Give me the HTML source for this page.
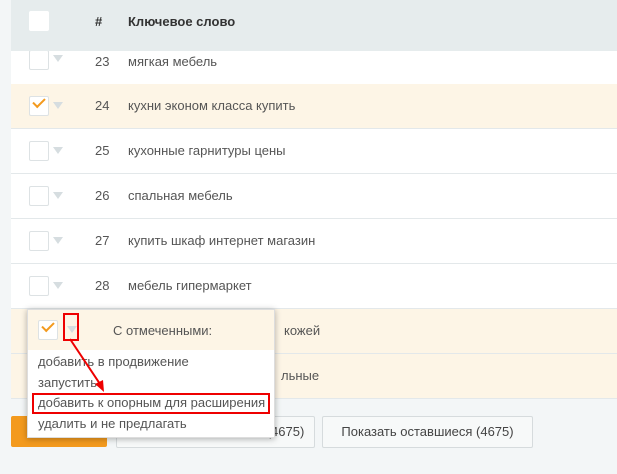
<!DOCTYPE html><html><head><meta charset="utf-8"><style>
body{margin:0;width:617px;height:474px;overflow:hidden;background:#f3f6f7;font-family:"Liberation Sans","DejaVu Sans",sans-serif;font-size:13px;color:#555;position:relative}
.hdr{position:absolute;left:11px;top:0;width:606px;height:51px;background:#e6eced}
.row{position:absolute;left:11px;width:606px;height:44px;border-bottom:1px solid #e3e8ea;background:#fff}
.row.y{background:#fdf5e6}
.cb{position:absolute;left:18px;top:12px;width:18px;height:18px;border:1px solid #dde2e4;background:#fff;border-radius:2px}
.tri{position:absolute;left:42px;top:18px;width:0;height:0;border-left:5px solid transparent;border-right:5px solid transparent;border-top:7px solid #d6dde0}
.n{position:absolute;left:84px;top:14px}
.k{position:absolute;left:117px;top:14px}
.chk{position:absolute;left:3px;top:1px;width:10px;height:5px;border-left:2px solid #f39a1e;border-bottom:2px solid #f39a1e;transform:rotate(-45deg)}
.btn{position:absolute;top:416px;height:30px;border:1px solid #d6dbdd;background:#f7f9f9;border-radius:2px;text-align:center;line-height:30px;font-size:13px;color:#444}
</style></head><body>
<div class="row" style="top:40px;height:44px"><div class="cb" style="top:10px"></div><div class="tri" style="top:15px"></div><span class="n" style="top:14px">23</span><span class="k">мягкая мебель</span></div>
<div class="hdr"><div class="cb" style="top:11px;border-color:#fff"></div><b style="position:absolute;left:84px;top:14px;color:#333">#</b><b style="position:absolute;left:117px;top:14px;color:#333">Ключевое слово</b></div>
<div class="row y" style="top:84px"><div class="cb"><div class="chk"></div></div><div class="tri"></div><span class="n">24</span><span class="k">кухни эконом класса купить</span></div>
<div class="row" style="top:129px"><div class="cb"></div><div class="tri"></div><span class="n">25</span><span class="k">кухонные гарнитуры цены</span></div>
<div class="row" style="top:174px"><div class="cb"></div><div class="tri"></div><span class="n">26</span><span class="k">спальная мебель</span></div>
<div class="row" style="top:219px"><div class="cb"></div><div class="tri"></div><span class="n">27</span><span class="k">купить шкаф интернет магазин</span></div>
<div class="row" style="top:264px"><div class="cb"></div><div class="tri"></div><span class="n">28</span><span class="k">мебель гипермаркет</span></div>
<div class="row y" style="top:309px"><span class="k" style="left:273px">кожей</span></div>
<div class="row y" style="top:354px"><span class="k" style="left:270px">льные</span></div>
<div style="position:absolute;left:11px;top:416px;width:96px;height:31px;background:#f39a1e;border-radius:2px"></div>
<div class="btn" style="left:116px;width:197px"><span style="margin-left:140px">(4675)</span></div>
<div class="btn" style="left:322px;width:209px">Показать оставшиеся (4675)</div>
<div style="position:absolute;left:27px;top:309px;width:246px;height:127px;background:#fff;box-shadow:0 1px 6px rgba(0,0,0,.3);border:1px solid #ddd">
<div style="height:40px;background:#fdf5e6;position:relative"><div class="cb" style="left:10px;top:10px"><div class="chk"></div></div><div class="tri" style="left:39px;top:16px"></div><span style="position:absolute;left:85px;top:13px">С отмеченными:</span></div>
<div style="position:absolute;left:10px;top:42px;line-height:20.7px">добавить в продвижение<br>запустить<br>добавить к опорным для расширения<br>удалить и не предлагать</div>
</div>
<div style="position:absolute;left:32px;top:393px;width:234px;height:17px;border:2px solid #e00"></div>
<div style="position:absolute;left:63px;top:313px;width:12px;height:24px;border:2px solid #e00"></div>
<svg style="position:absolute;left:0;top:0" width="617" height="474"><line x1="70" y1="339" x2="100" y2="384" stroke="#e00" stroke-width="2"/><polygon points="104,392 95,384 103,380" fill="#e00"/></svg>
</body></html>
